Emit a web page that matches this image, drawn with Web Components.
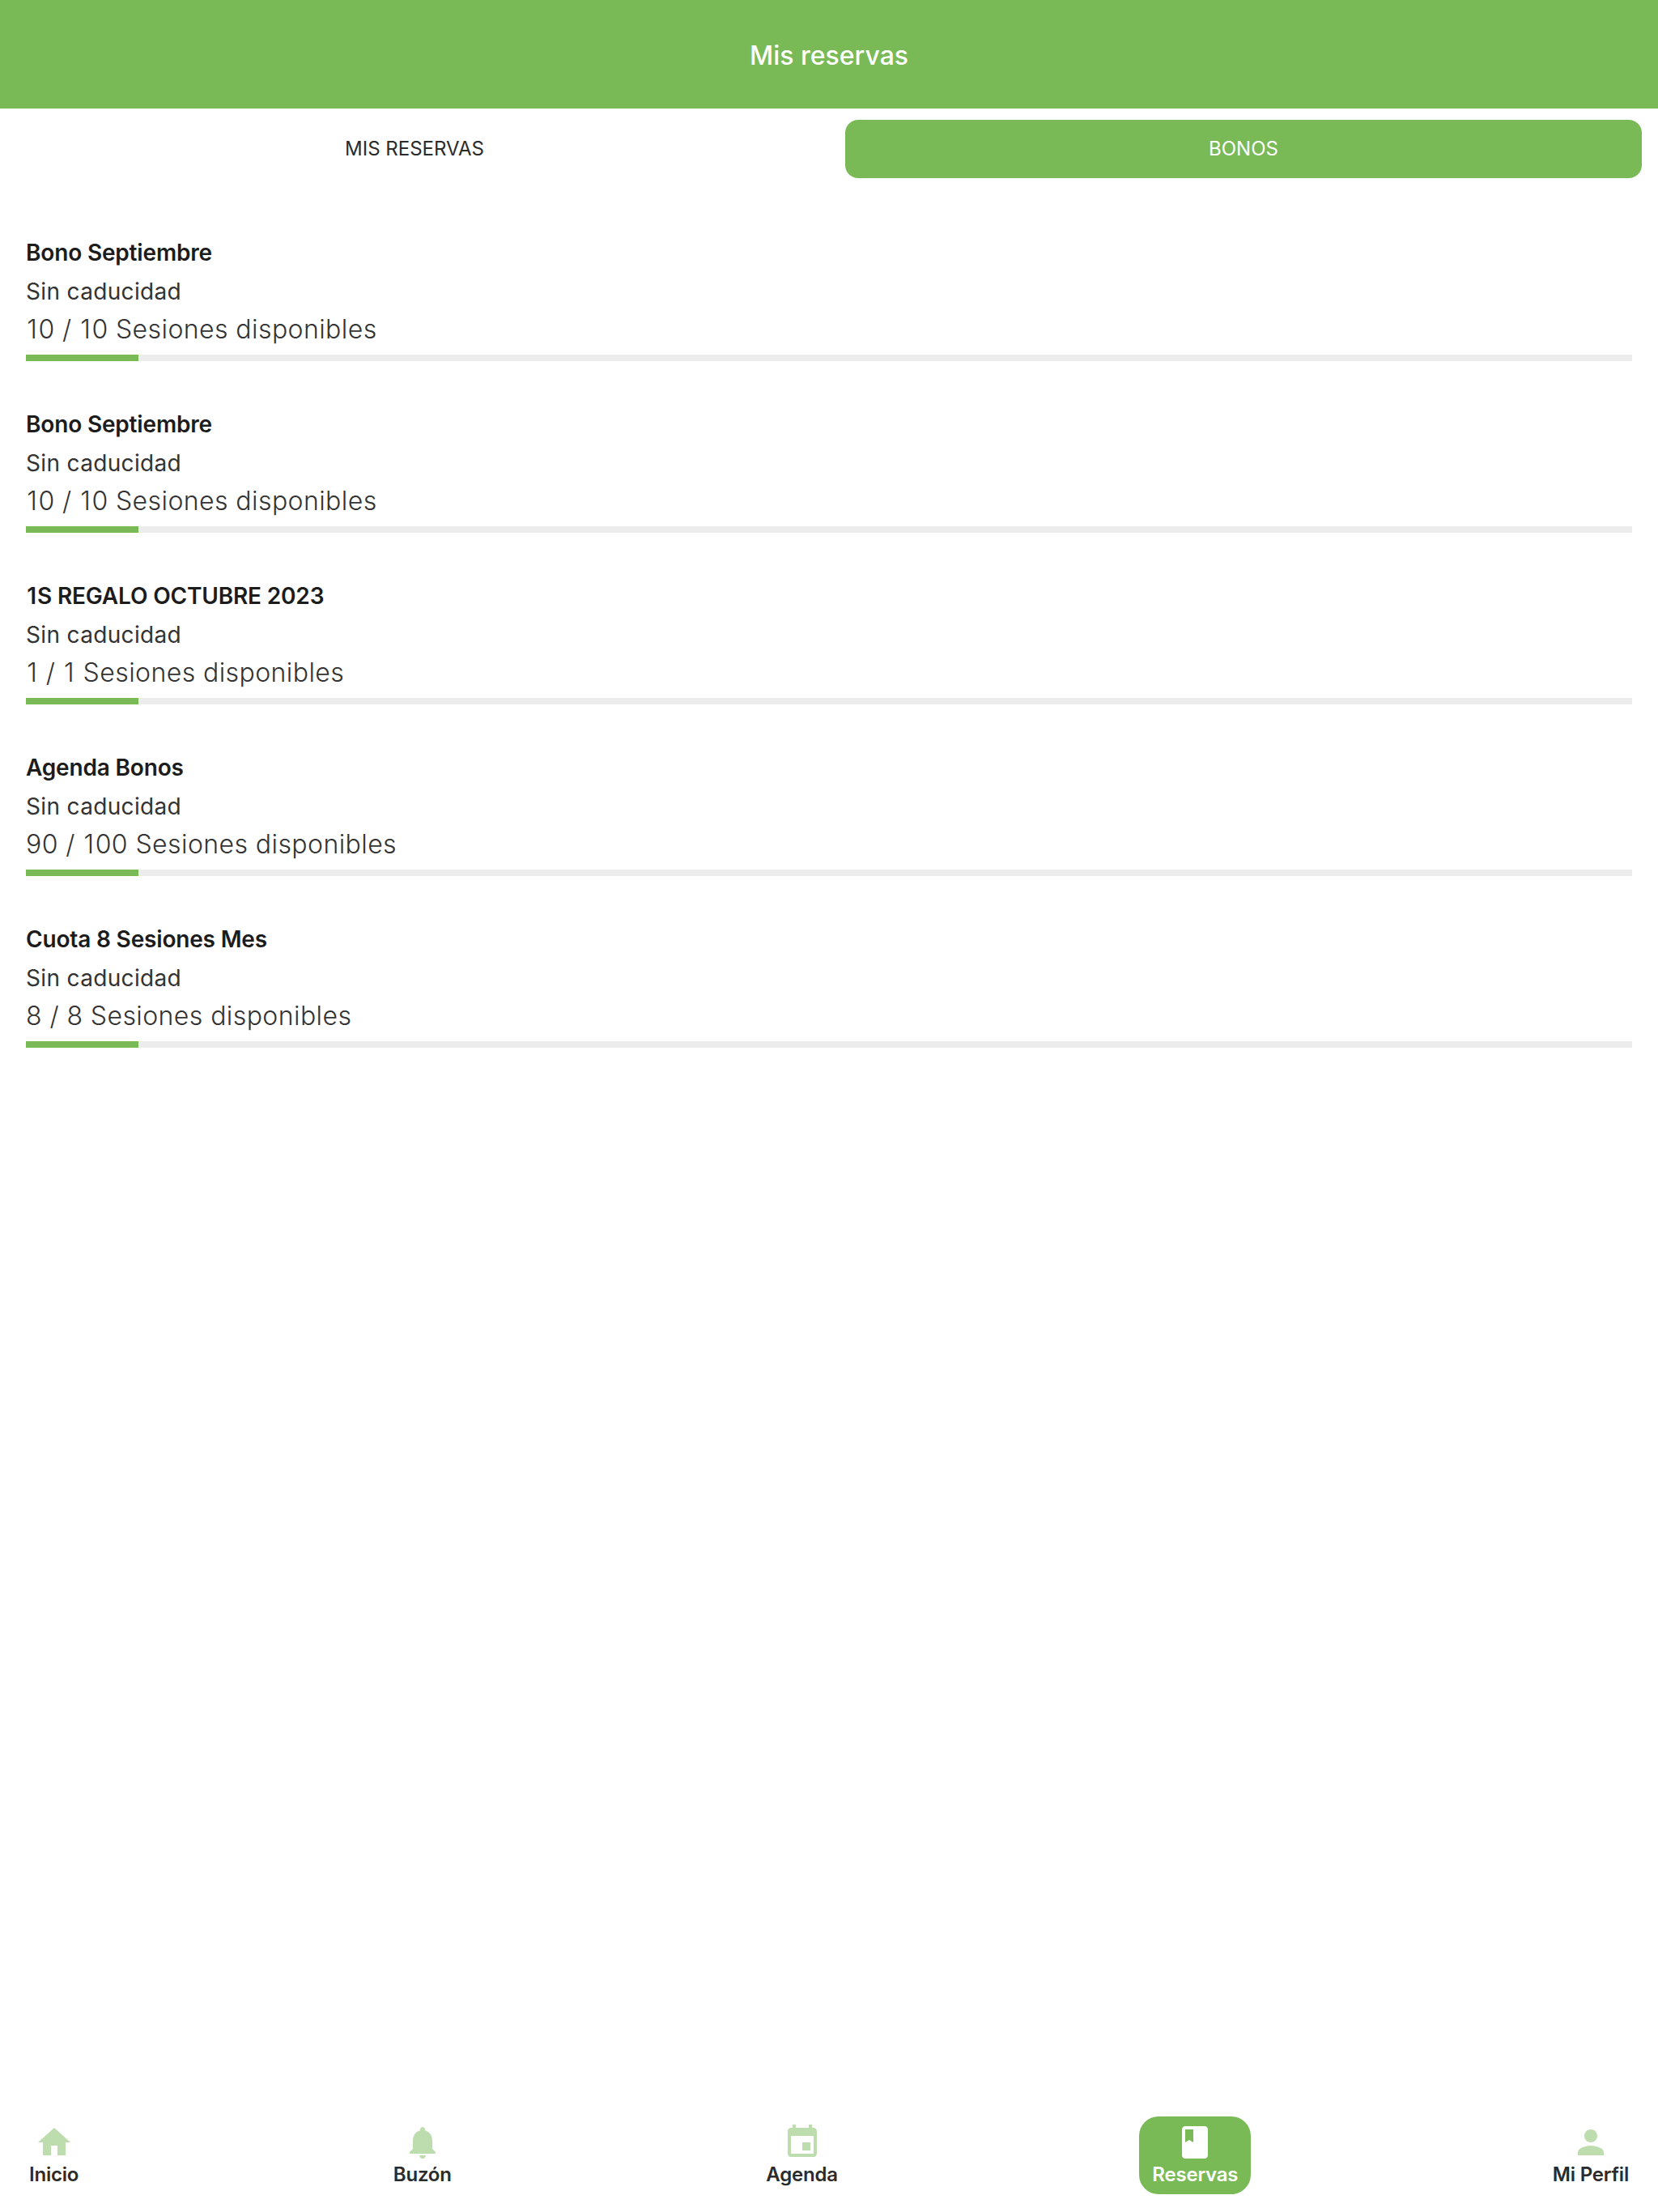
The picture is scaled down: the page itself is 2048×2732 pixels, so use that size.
<!DOCTYPE html>
<html lang="es">
<head>
<meta charset="utf-8">
<title>Mis reservas</title>
<style>
html, body { margin: 0; height: 100%; background: #fff; }
body { font-family: Inter, "Liberation Sans", sans-serif; }
</style>
</head>
<body>
<app-page>
  <app-header>Mis reservas</app-header>
  <tab-bar>
    <tab-button>MIS RESERVAS</tab-button>
    <tab-button active>BONOS</tab-button>
  </tab-bar>
  <bono-list>
    <bono-item name="Bono Septiembre" expiry="Sin caducidad" sessions="10 / 10 Sesiones disponibles"></bono-item>
    <bono-item name="Bono Septiembre" expiry="Sin caducidad" sessions="10 / 10 Sesiones disponibles"></bono-item>
    <bono-item name="1S REGALO OCTUBRE 2023" expiry="Sin caducidad" sessions="1 / 1 Sesiones disponibles"></bono-item>
    <bono-item name="Agenda Bonos" expiry="Sin caducidad" sessions="90 / 100 Sesiones disponibles"></bono-item>
    <bono-item name="Cuota 8 Sesiones Mes" expiry="Sin caducidad" sessions="8 / 8 Sesiones disponibles"></bono-item>
  </bono-list>
  <bottom-nav>
    <nav-item icon="home">Inicio</nav-item>
    <nav-item icon="bell">Buzón</nav-item>
    <nav-item icon="event">Agenda</nav-item>
    <nav-item icon="book" active>Reservas</nav-item>
    <nav-item icon="person">Mi Perfil</nav-item>
  </bottom-nav>
</app-page>
<script>
const GREEN = '#79ba57';

const icons = {
  home: 'M10 20v-6h4v6h5v-8h3L12 3 2 12h3v8z',
  bell: 'M12 22c1.1 0 2-.9 2-2h-4c0 1.1.89 2 2 2zm6-6v-5c0-3.07-1.64-5.64-4.5-6.32V4c0-.83-.67-1.5-1.5-1.5s-1.5.67-1.5 1.5v.68C7.63 5.36 6 7.92 6 11v5l-2 2v1h16v-1l-2-2z',
  event: 'M17 12h-5v5h5v-5zM16 1v2H8V1H6v2H5c-1.11 0-1.99.9-1.99 2L3 19c0 1.1.89 2 2 2h14c1.1 0 2-.9 2-2V5c0-1.1-.9-2-2-2h-1V1h-2zm3 18H5V8h14v11z',
  book: 'M18 2H6c-1.1 0-2 .9-2 2v16c0 1.1.9 2 2 2h12c1.1 0 2-.9 2-2V4c0-1.1-.9-2-2-2zM6 4h5v8l-2.5-1.5L6 12V4z',
  person: 'M12 12c2.21 0 4-1.79 4-4s-1.79-4-4-4-4 1.79-4 4 1.79 4 4 4zm0 2c-2.67 0-8 1.34-8 4v2h16v-2c0-2.66-5.33-4-8-4z'
};

function define(name, css, html, setup) {
  customElements.define(name, class extends HTMLElement {
    constructor() {
      super();
      this.attachShadow({mode: 'open'});
      this.shadowRoot.innerHTML = `<style>${css}</style>${html}`;
    }
    connectedCallback() {
      if (setup) setup(this);
    }
  });
}

define('app-page', `
  :host { display: flex; flex-direction: column; height: 2732px; }
`, '<slot></slot>');

define('app-header', `
  :host {
    display: flex; align-items: center; justify-content: center;
    box-sizing: border-box; height: 134px; padding-top: 3px;
    background: ${GREEN}; color: #fff;
    font-size: 32px; font-weight: 500;
  }
`, '<slot></slot>');

define('tab-bar', `
  :host {
    display: grid; grid-template-columns: 1fr 1fr; gap: 40px;
    padding: 14px 20px 0;
  }
`, '<slot></slot>');

define('tab-button', `
  :host {
    display: flex; align-items: center; justify-content: center;
    box-sizing: border-box; height: 72px; padding-bottom: 2px; border-radius: 16px;
    color: #2b2b2b; font-size: 24px;
  }
  :host([active]) { background: ${GREEN}; color: #fff; }
`, '<slot></slot>');

define('bono-list', `
  :host {
    display: flex; flex-direction: column; gap: 55px;
    padding: 69px 32px 0;
  }
`, '<slot></slot>');

// the reference font has a wider "1" than the installed Inter
function withWideOnes(text) {
  return text.replace(/1/g, '<span class="one">1</span>');
}

define('bono-item', `
  :host { display: block; color: #222; }
  div { height: 47px; line-height: 47px; white-space: nowrap; }
  .one { padding: 0 1.2px; }
  .name { font-size: 28px; font-weight: 600; letter-spacing: -.17px; color: #1c1c1c; }
  .expiry { font-size: 28px; letter-spacing: .34px; color: #333; padding-top: 1px; height: 46px; }
  .sessions { font-size: 32px; font-weight: 300; letter-spacing: .42px; color: #333; }
  .track { height: 8px; margin-top: 8px; background: #ececec; }
  .fill { height: 8px; width: 7%; background: ${GREEN}; }
`, `
  <div class="name"></div>
  <div class="expiry"></div>
  <div class="sessions"></div>
  <div class="track"><div class="fill"></div></div>
`, el => {
  const root = el.shadowRoot;
  root.querySelector('.name').innerHTML = withWideOnes(el.getAttribute('name'));
  root.querySelector('.expiry').textContent = el.getAttribute('expiry');
  root.querySelector('.sessions').innerHTML = withWideOnes(el.getAttribute('sessions'));
});

define('bottom-nav', `
  :host {
    display: flex; justify-content: space-between;
    margin-top: auto; padding: 0 20px 22px;
  }
`, '<slot></slot>');

define('nav-item', `
  :host {
    display: flex; flex-direction: column; align-items: center;
    padding: 8px 16px; border-radius: 24px;
    color: #2b2b2b; font-size: 24px; font-weight: 600; line-height: 32px;
    letter-spacing: -.2px;
  }
  svg { display: block; width: 48px; height: 48px; fill: ${GREEN}; opacity: .48; }
  :host([active]) { background: ${GREEN}; color: #fff; }
  :host([active]) svg { fill: #fff; opacity: 1; }
`, `
  <svg viewBox="0 0 24 24"><path></path></svg>
  <span><slot></slot></span>
`, el => {
  el.shadowRoot.querySelector('path').setAttribute('d', icons[el.getAttribute('icon')]);
});
</script>
</body>
</html>
